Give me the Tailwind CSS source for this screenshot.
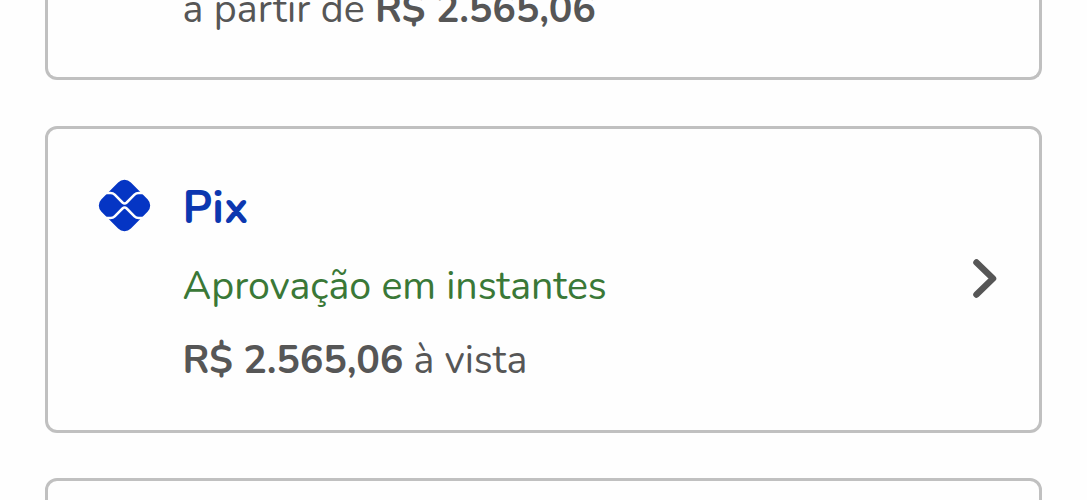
<!DOCTYPE html>
<html lang="pt-BR">
<head>
<meta charset="utf-8">
<title>Pagamento</title>
<script src="https://cdn.jsdelivr.net/npm/@tailwindcss/browser@4"></script>
</head>
<body class="bg-[#fefefe]">
<main class="flex h-[500px] flex-col overflow-hidden px-[45px] font-['Nunito','Lato',sans-serif] text-[39.400px] leading-[50px] text-[#565656]">
  <section class="flex h-20 shrink-0 items-end rounded-b-[12px] border-[3px] border-t-0 border-[#c0c0c0] pb-[43px] pl-[134.500px]">
    <p class="whitespace-nowrap"><span class="tracking-[0.080px]">a partir de</span> <b class="tracking-[-0.180px]">R$ 2.565,06</b></p>
  </section>
  <section class="mt-[46px] mb-[45px] flex h-[307px] shrink-0 items-start rounded-[12px] border-[3px] border-[#c0c0c0] pt-[50px] pr-[38px] pl-[50px]">
    <svg class="mr-[31.500px] size-[53px] shrink-0" viewBox="0 0 53 53">
      <rect x="5.700" y="5.700" width="41.600" height="41.600" rx="9" transform="rotate(45 26.5 26.5)" fill="#0535c4"/>
      <path d="M7 14h5.500c1.700 0 3 .5 4.200 1.700l7.800 7.800c1.300 1.200 2.900 1.200 4.200 0l7.800-7.800c1.200-1.200 2.500-1.700 4.200-1.700H46M7 39h5.500c1.700 0 3-.5 4.200-1.700l7.800-7.800c1.300-1.200 2.900-1.200 4.200 0l7.800 7.800c1.200 1.200 2.500 1.700 4.200 1.700H46" fill="none" stroke="#fefefe" stroke-width="2.5"/>
    </svg>
    <div class="flex-1 pt-[2px] whitespace-nowrap">
      <h2 class="h-[80px] text-[45.500px] leading-[54px] font-bold text-[#0c37b0]">Pix</h2>
      <p class="h-[74px] tracking-[-0.020px] text-[#3a7837]">Aprovação em instantes</p>
      <p><b class="tracking-[-0.180px]">R$ 2.565,06</b> <span>à vista</span></p>
    </div>
    <svg class="mt-[77px] h-[44px] w-[30px] shrink-0" viewBox="0 0 30 44" fill="none" stroke="#565656" stroke-width="6.500" stroke-linecap="round" stroke-linejoin="round"><path d="M5.500 6.500 22 22.500 5.500 38.500"/></svg>
  </section>
  <section class="h-[100px] shrink-0 rounded-t-[12px] border-[3px] border-[#c0c0c0]"></section>
</main>
</body>
</html>
